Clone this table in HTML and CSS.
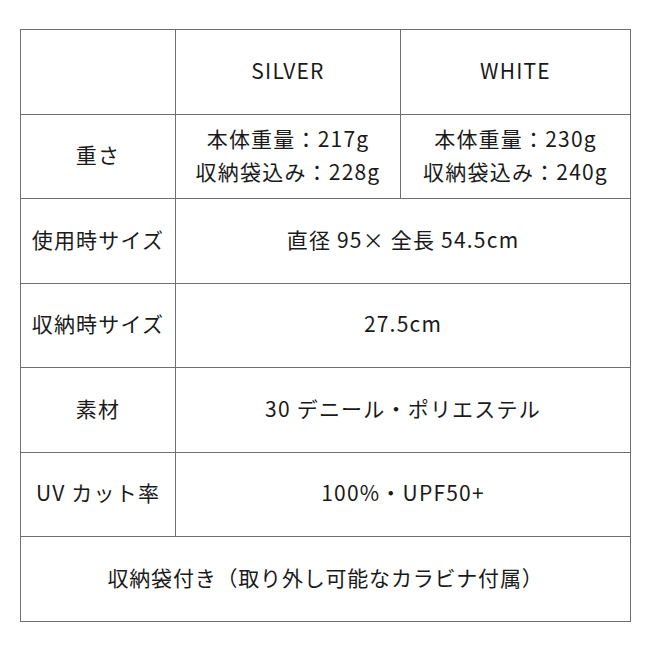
FILE: index.html
```html
<!DOCTYPE html>
<html lang="ja">
<head>
<meta charset="utf-8">
<link rel="stylesheet" href="styles.css">
</head>
<body>
<table class="spec">
  <colgroup>
    <col class="c1"><col class="c2"><col class="c3">
  </colgroup>
  <tr><td></td><td>SILVER</td><td>WHITE</td></tr>
  <tr><td>重さ</td><td>本体重量：217g<br>収納袋込み：228g</td><td>本体重量：230g<br>収納袋込み：240g</td></tr>
  <tr><td>使用時サイズ</td><td colspan="2">直径 95× 全長 54.5cm</td></tr>
  <tr><td>収納時サイズ</td><td colspan="2">27.5cm</td></tr>
  <tr><td>素材</td><td colspan="2">30 デニール・ポリエステル</td></tr>
  <tr><td>UV カット率</td><td colspan="2">100%・UPF50+</td></tr>
  <tr><td class="note" colspan="3">収納袋付き（取り外し可能なカラビナ付属）</td></tr>
</table>
</body>
</html>
```

FILE: styles.css
```css
html, body {
  margin: 0;
  padding: 0;
  background: #fff;
}
body {
  padding: 29px 20px 0 20px;
  font-family: "Noto Sans CJK JP", "Noto Sans", sans-serif;
  color: #1a1a1a;
}
.spec {
  width: 610px;
  border-collapse: collapse;
  table-layout: fixed;
}
.c1 { width: 155px; }
.c2 { width: 225px; }
.c3 { width: 230px; }
.spec td {
  border: 1px solid #6f6f6f;
  height: 80.5px;
  padding: 0 0 3px 0;
  text-align: center;
  vertical-align: middle;
  font-size: 21px;
  letter-spacing: 1.2px;
  line-height: 33px;
}
.spec td.note {
  letter-spacing: 0.8px;
}
```
